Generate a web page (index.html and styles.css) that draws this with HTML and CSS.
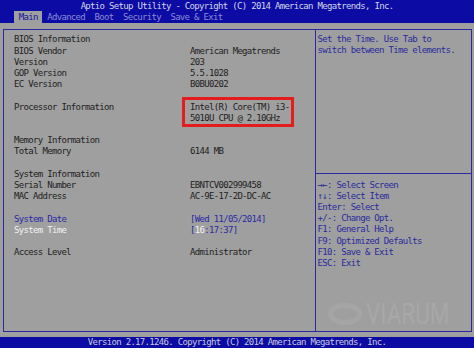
FILE: index.html
```html
<!DOCTYPE html>
<html>
<head>
<meta charset="utf-8">
<link rel="stylesheet" href="styles.css">
</head>
<body>
<div class="screen">
  <header class="topbar">
    <div class="title">Aptio Setup Utility - Copyright (C) 2014 American Megatrends, Inc.</div>
    <nav class="tabs">
      <span class="tab active">Main</span><span class="tab">Advanced</span><span class="tab">Boot</span><span class="tab">Security</span><span class="tab">Save &amp; Exit</span>
    </nav>
  </header>
  <main class="frame">
    <section class="info">
      <div class="group">
        <div class="row"><span class="lbl">BIOS Information</span></div>
        <div class="row"><span class="lbl">BIOS Vendor</span><span class="val">American Megatrends</span></div>
        <div class="row"><span class="lbl">Version</span><span class="val">203</span></div>
        <div class="row"><span class="lbl">GOP Version</span><span class="val">5.5.1028</span></div>
        <div class="row"><span class="lbl">EC Version</span><span class="val">B0BU0202</span></div>
      </div>
      <div class="group">
        <div class="row"><span class="lbl">Processor Information</span><span class="val marked">Intel(R) Core(TM) i3-<br>5010U CPU @ 2.10GHz</span></div>
      </div>
      <div class="group">
        <div class="row"><span class="lbl">Memory Information</span></div>
        <div class="row"><span class="lbl">Total Memory</span><span class="val">6144 MB</span></div>
      </div>
      <div class="group">
        <div class="row"><span class="lbl">System Information</span></div>
        <div class="row"><span class="lbl">Serial Number</span><span class="val">EBNTCV002999458</span></div>
        <div class="row"><span class="lbl">MAC Address</span><span class="val">AC-9E-17-2D-DC-AC</span></div>
      </div>
      <div class="group">
        <div class="row"><span class="lbl blue">System Date</span><span class="val blue">[Wed 11/05/2014]</span></div>
        <div class="row"><span class="lbl white">System Time</span><span class="val blue">[<span class="white">16</span>:17:37]</span></div>
      </div>
      <div class="group">
        <div class="row"><span class="lbl">Access Level</span><span class="val">Administrator</span></div>
      </div>
    </section>
    <aside class="side">
      <div class="help">Set the Time. Use Tab to<br>switch between Time elements.</div>
      <div class="keys">
        <div class="key">&#8594;&#8592;: Select Screen</div>
        <div class="key">&#8593;&#8595;: Select Item</div>
        <div class="key">Enter: Select</div>
        <div class="key">+/-: Change Opt.</div>
        <div class="key">F1: General Help</div>
        <div class="key">F9: Optimized Defaults</div>
        <div class="key">F10: Save &amp; Exit</div>
        <div class="key">ESC: Exit</div>
      </div>
      <div class="watermark"><span class="wm-logo"></span><span class="wm-text">VIARUM</span></div>
    </aside>
  </main>
  <footer class="footer">Version 2.17.1246. Copyright (C) 2014 American Megatrends, Inc.</footer>
</div>
</body>
</html>
```
FILE: styles.css
```css
* { box-sizing: border-box; }
html, body { margin: 0; padding: 0; }
body {
  width: 474px;
  height: 348px;
  overflow: hidden;
  background: #9f9f9f;
  font-family: "DejaVu Sans Mono", "Liberation Mono", monospace;
  font-size: 9px;
  letter-spacing: -0.68px;
  color: #1e1e1e;
}
.screen {
  display: flex;
  flex-direction: column;
  width: 474px;
  height: 348px;
}
.topbar {
  background: #0c0ca4;
  height: 23px;
  flex: none;
}
.title {
  height: 11px;
  line-height: 12px;
  text-align: center;
  color: #d4d4e6;
}
.tabs {
  display: flex;
  height: 12px;
  padding-left: 14px;
  line-height: 12px;
}
.tab {
  padding: 0 4.74px;
  color: #8a8ad6;
  white-space: pre;
}
.tab.active {
  background: #9f9f9f;
  color: #1414a0;
}
.frame {
  flex: none;
  margin: 6px 2px 5px 3px;
  height: 303px;
  border: 1px solid #2a2a9c;
  display: grid;
  grid-template-columns: 312px 1fr;
  overflow: hidden;
}
.info {
  border-right: 1px solid #2a2a9c;
  padding: 4.4px 0 0 10px;
  line-height: 11.2px;
}
.group { margin-bottom: 11.2px; }
.row {
  display: grid;
  grid-template-columns: 176px 1fr;
  white-space: pre;
}
.val { position: relative; }
.marked { width: 100px; }
.marked::after {
  content: "";
  position: absolute;
  left: -8px;
  right: -4px;
  top: -4.6px;
  bottom: -3px;
  border: 3px solid #e41c1c;
}
.blue { color: #2a2aa4; }
.white { color: #f2f2f2; }
.side {
  position: relative;
  display: flex;
  flex-direction: column;
  color: #2a2a9e;
  line-height: 11.2px;
}
.help {
  height: 144px;
  padding: 3.7px 0 0 1.5px;
  border-bottom: 1px solid #2a2a9c;
}
.keys {
  padding: 5.5px 0 0 1.5px;
}
.key { white-space: pre; }
.watermark {
  position: absolute;
  right: 12px;
  bottom: 3px;
  display: flex;
  align-items: center;
  gap: 4px;
  color: rgba(255, 255, 255, 0.09);
}
.wm-logo {
  width: 34px;
  height: 22px;
  border: 5px solid rgba(255, 255, 255, 0.07);
  border-radius: 50%;
}
.wm-text {
  font-family: "Roboto", "Liberation Sans", sans-serif;
  font-size: 30px;
  letter-spacing: 0;
  line-height: 28px;
  transform: scaleX(0.75);
  transform-origin: left center;
  margin-right: -18px;
}
.footer {
  flex: none;
  height: 11px;
  line-height: 11px;
  background: #0c0ca4;
  color: #c8c8dc;
  text-align: center;
}
```
